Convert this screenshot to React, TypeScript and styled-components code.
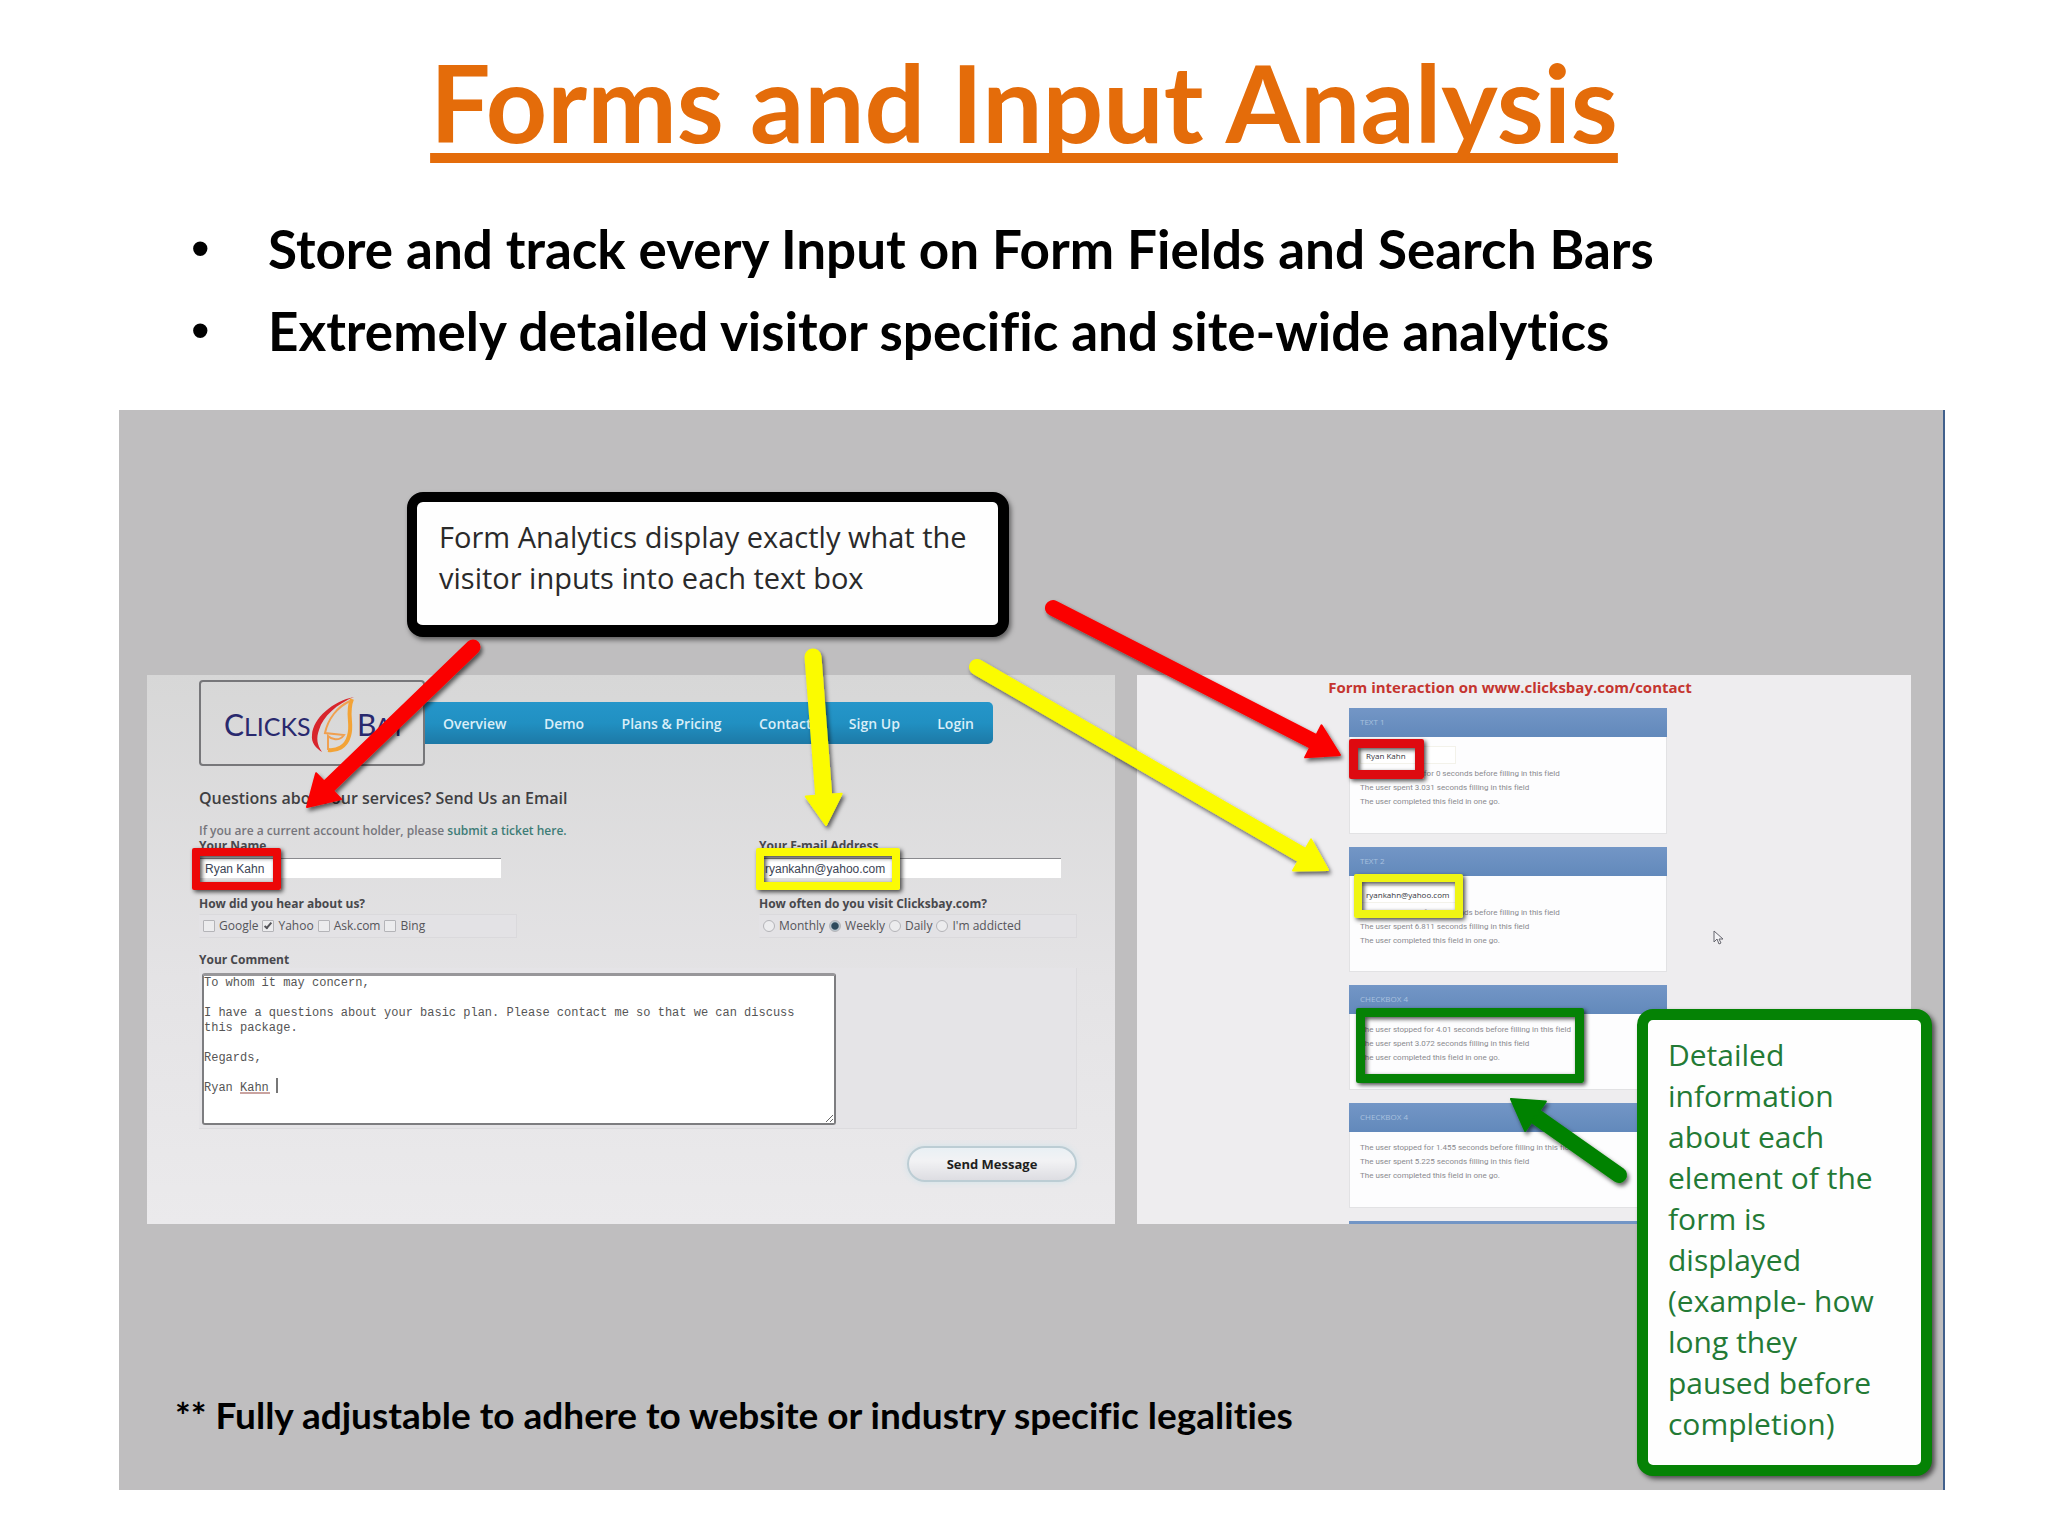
import React from "react";
import styled, { createGlobalStyle, css } from "styled-components";

const GlobalStyle = createGlobalStyle`
  *, *::before, *::after { box-sizing: border-box; }
  body {
    margin: 0;
    background: #fff;
    font-family: Lato, "Open Sans", sans-serif;
    font-variant-ligatures: no-common-ligatures;
  }
  h1, h2, h3, p, ul, fieldset { margin: 0; padding: 0; border: 0; }
`;

const humanist = `"Open Sans", "Noto Sans", sans-serif`;

/* ---------- slide ---------- */

const Slide = styled.main`
  display: flex;
  flex-direction: column;
  padding: 38px 103px 44px 119px;
`;

const Title = styled.h1`
  align-self: center;
  margin-right: 16px;
  font-size: 107px;
  line-height: 128px;
  font-weight: 700;
  color: #e46c0a;
  text-decoration: underline;
  text-decoration-thickness: 10px;
  text-underline-offset: 10px;
  text-decoration-skip-ink: none;
`;

const Bullets = styled.ul`
  list-style: none;
  margin: 42px 0 38px;
  padding-left: 72px;
`;

const Bullet = styled.li`
  display: flex;
  font-size: 53px;
  line-height: 82px;
  font-weight: 700;
  color: #000;

  &::before {
    content: "•";
    flex: none;
    width: 77px;
    font-family: "Liberation Sans", Arial, sans-serif;
    font-weight: 400;
  }
`;

const Stage = styled.section`
  position: relative;
  display: flex;
  flex-direction: column;
  padding: 82px 32px 52px 28px;
  background: #bfbebf;
  border-right: 2px solid #41608c;
`;

const calloutBase = css`
  border-style: solid;
  border-radius: 16px;
  background: #fefefe;
  font-family: ${humanist};
  line-height: 41px;
`;

const TopCallout = styled.p`
  ${calloutBase}
  width: 602px;
  min-height: 145px;
  margin-left: 260px;
  padding: 14px 22px;
  border-width: 10px 11px 12px 10px;
  border-color: #000;
  font-size: 29px;
  color: #2a2a2a;
  box-shadow: 2px 3px 5px rgba(0, 0, 0, 0.5);
`;

const SideCallout = styled.p`
  ${calloutBase}
  position: absolute;
  right: 11px;
  bottom: 14px;
  width: 295px;
  height: 467px;
  padding: 14px 20px;
  border-width: 11px;
  border-color: #058205;
  font-size: 30px;
  color: #237a35;
  box-shadow: 3px 3px 5px rgba(0, 0, 0, 0.6);
`;

const Panels = styled.div`
  display: grid;
  grid-template-columns: 968fr 774fr;
  gap: 22px;
  margin-top: 38px;
`;

const Note = styled.p`
  margin: 168px 0 0 28px;
  font-size: 37px;
  line-height: 46px;
  font-weight: 700;
  color: #000;
`;

/* ---------- contact page ---------- */

const ContactPanel = styled.div`
  padding: 5px 38px 36px 52px;
  background: linear-gradient(#d7d7d7, #e4e3e5 55%, #ebeaec);
  font-family: ${humanist};
  color: #4c4c50;
`;

const Header = styled.header`
  display: flex;
  align-items: center;
  padding-right: 84px;
`;

const LogoBox = styled.div`
  flex: none;
  width: 226px;
  height: 86px;
  border: 2px solid #77777a;
  border-radius: 4px;
`;

const Nav = styled.nav`
  flex: 1;
  display: flex;
  justify-content: space-between;
  align-items: center;
  height: 42px;
  padding: 0 19px 0 18px;
  border-radius: 0 5px 5px 0;
  background: linear-gradient(#2596ca, #2190c2 50%, #1d79a6);
`;

const NavLink = styled.a`
  font-size: 14px;
  font-weight: 600;
  color: #d9eef8;
  text-decoration: none;
`;

const PanelHeading = styled.h2`
  margin: 19px 0 12px;
  font-size: 16px;
  line-height: 26px;
  font-weight: 600;
  color: #3f3f42;
`;

const Intro = styled.p`
  font-size: 12px;
  line-height: 15px;
  font-weight: 600;
  color: #76767c;
`;

const TicketLink = styled.a`
  color: #3d7c76;
  text-decoration: none;
`;

const FieldGrid = styled.div`
  display: grid;
  grid-template-columns: 318px 318px;
  justify-content: space-between;
`;

const labelText = css`
  display: block;
  font-size: 12px;
  line-height: 16px;
  font-weight: 700;
  color: #48484c;
`;

const Label = styled.label`
  ${labelText}
`;

const Legend = styled.legend`
  ${labelText}
  padding: 0 0 2px;
`;

const TextWrap = styled.div`
  position: relative;
  height: 28px;
  padding-top: 4px;
`;

const TextInput = styled.input`
  display: block;
  width: 302px;
  height: 20px;
  padding: 0 6px;
  border: 0;
  border-top: 1px solid #8a8a8e;
  background: #fff;
  font-family: "Liberation Sans", Arial, sans-serif;
  font-size: 12px;
  color: #3c4454;
`;

const Highlight = styled.span<{ $color: string; $x: number; $y: number; $w: number; $h: number; $b?: number }>`
  position: absolute;
  left: ${(p) => p.$x}px;
  top: ${(p) => p.$y}px;
  width: ${(p) => p.$w}px;
  height: ${(p) => p.$h}px;
  border: ${(p) => p.$b ?? 8}px solid ${(p) => p.$color};
  border-radius: 2px;
  box-shadow: 2px 2px 4px rgba(0, 0, 0, 0.7), inset 2px 2px 4px rgba(0, 0, 0, 0.7);
  pointer-events: none;
`;

const Choices = styled.fieldset`
  min-width: 0;
  margin-top: 14px;
`;

const ChoiceRow = styled.div`
  display: flex;
  align-items: center;
  gap: 4px;
  height: 24px;
  padding: 0 3px;
  border: 1px solid #dad9dc;
  border-left-color: transparent;
  background: #e3e2e5;
`;

const Choice = styled.label`
  display: flex;
  align-items: center;
  gap: 4px;
  font-size: 12px;
  line-height: 16px;
  color: #55555a;
  white-space: nowrap;
`;

const Tick = styled.input`
  appearance: none;
  flex: none;
  width: 12px;
  height: 12px;
  margin: 0;
  border: 1px solid #b4b4b8;
  border-radius: ${(p) => (p.type === "radio" ? "50%" : "1px")};
  background: #ececee;

  &[type="checkbox"]:checked::after {
    content: "";
    display: block;
    width: 4px;
    height: 8px;
    margin: 0 0 0 3px;
    border: solid #55555a;
    border-width: 0 2px 2px 0;
    transform: rotate(40deg);
  }

  &[type="radio"]:checked {
    background: radial-gradient(circle, #2d4a5c 45%, #b9c6ce 60%);
  }
`;

const CommentLabel = styled(Label)`
  margin-top: 14px;
`;

const CommentWrap = styled.div`
  position: relative;
  padding: 5px 3px 3px;
  border: solid #dcdbde;
  border-width: 0 1px 1px 0;
  background: #e5e4e7;
`;

const Comment = styled.textarea`
  display: block;
  width: 634px;
  height: 152px;
  padding: 0;
  border: 2px solid #7d7d80;
  border-top: 3px solid #98979a;
  border-radius: 3px;
  background: #fff;
  font-family: "Liberation Mono", "Courier New", monospace;
  font-size: 12px;
  line-height: 15px;
  color: #555;
`;

const SpellingMark = styled.span`
  position: absolute;
  left: 41px;
  top: 124px;
  width: 30px;
  height: 2px;
  background: #c9a3a0;
`;

const Caret = styled.span`
  position: absolute;
  left: 77px;
  top: 110px;
  width: 2px;
  height: 15px;
  background: #777;
`;

const SendButton = styled.button`
  display: block;
  width: 170px;
  height: 36px;
  margin: 17px 0 0 auto;
  padding: 0;
  border: 2px solid #bccdd4;
  border-radius: 18px;
  background: linear-gradient(#e9f0f4, #f2f2f4 40%, #dddde2);
  box-shadow: 0 0 6px #cfe3ea;
  font-family: ${humanist};
  font-size: 13px;
  font-weight: 700;
  color: #1e1e20;
`;

/* ---------- analytics page ---------- */

const ReportPanel = styled.div`
  position: relative;
  display: flex;
  flex-direction: column;
  align-items: flex-start;
  gap: 13px;
  max-height: 549px;
  overflow: hidden;
  padding-left: 212px;
  background: #eeedef;
  font-family: ${humanist};
`;

const ReportTitle = styled.h2`
  align-self: center;
  margin: 5px 0 0 -240px;
  font-size: 15px;
  line-height: 15px;
  font-weight: 700;
  color: #c5352f;
`;

const Card = styled.article<{ $h: number }>`
  position: relative;
  flex: none;
  width: 318px;
  height: ${(p) => p.$h}px;
  border: 1px solid #e2e2e4;
  border-top: 0;
  background: #fdfdfe;
`;

const CardTitle = styled.h3`
  height: 29px;
  margin: 0 -1px;
  padding-left: 11px;
  background: linear-gradient(#7396c6, #6289bb);
  font-size: 8px;
  line-height: 27px;
  font-weight: 400;
  color: #a9c1df;
`;

const CardBody = styled.div`
  padding: 9px 10px;
  font-family: Roboto, ${humanist};
  font-size: 8px;
  line-height: 14px;
  color: #8a8a8e;
`;

const CardInput = styled.input`
  display: block;
  width: 96px;
  height: 18px;
  margin-bottom: 3px;
  padding: 0 5px;
  border: 1px solid #f3f2ea;
  background: #fff;
  font-family: ${humanist};
  font-size: 8px;
  color: #34343c;
`;

const Cursor = styled.svg`
  position: absolute;
  left: 576px;
  top: 255px;
`;

const Arrows = styled.svg`
  position: absolute;
  left: 0;
  top: 0;
  pointer-events: none;
`;

/* ---------- data ---------- */

const navItems = ["Overview", "Demo", "Plans & Pricing", "Contact", "Sign Up", "Login"];

const sources = [
  { name: "Google", on: false },
  { name: "Yahoo", on: true },
  { name: "Ask.com", on: false },
  { name: "Bing", on: false },
];

const visits = ["Monthly", "Weekly", "Daily", "I'm addicted"];

const comment = `To whom it may concern,

I have a questions about your basic plan. Please contact me so that we can discuss
this package.

Regards,

Ryan Kahn `;

const RED = "#fb0505";
const DARK_RED = "#de0a10";
const YELLOW = "#fbfb05";
const GREEN = "#058205";

const cards = [
  { title: "TEXT 1", value: "Ryan Kahn", pause: "0", spent: "3.031", height: 126, mark: { $color: DARK_RED, $x: -1, $y: 31, $w: 75, $h: 40, $b: 9 } },
  { title: "TEXT 2", value: "ryankahn@yahoo.com", pause: "0", spent: "6.811", height: 125, mark: { $color: "#eff514", $x: 4, $y: 27, $w: 109, $h: 44 } },
  { title: "CHECKBOX 4", pause: "4.01", spent: "3.072", height: 105, mark: { $color: GREEN, $x: 6, $y: 23, $w: 228, $h: 75, $b: 9 } },
  { title: "CHECKBOX 4", pause: "1.455", spent: "5.225", height: 105 },
  { title: "", pause: "", spent: "", height: 105 },
];

/* Each arrow runs from its round end (x1,y1) to its tip (x2,y2). */
const arrows = [
  { color: RED, x1: 473, y1: 647, x2: 307, y2: 807, w: 15 },
  { color: YELLOW, x1: 813, y1: 657, x2: 826, y2: 825, w: 17 },
  { color: YELLOW, x1: 977, y1: 667, x2: 1328, y2: 870, w: 16 },
  { color: RED, x1: 1053, y1: 608, x2: 1340, y2: 755, w: 16 },
  { color: GREEN, x1: 1619, y1: 1175, x2: 1511, y2: 1099, w: 16 },
];

function Arrow({ color, x1, y1, x2, y2, w }: (typeof arrows)[number]) {
  const len = Math.hypot(x2 - x1, y2 - y1);
  const ux = (x2 - x1) / len;
  const uy = (y2 - y1) / len;
  const bx = x2 - ux * 30;
  const by = y2 - uy * 30;
  const half = 18;
  return (
    <g>
      <line x1={x1} y1={y1} x2={bx + ux * 4} y2={by + uy * 4} stroke={color} strokeWidth={w} strokeLinecap="round" />
      <polygon
        points={`${x2},${y2} ${bx - uy * half},${by + ux * half} ${bx + uy * half},${by - ux * half}`}
        fill={color}
        stroke={color}
        strokeWidth="2"
        strokeLinejoin="round"
      />
    </g>
  );
}

function Logo() {
  return (
    <LogoBox>
      <svg width="222" height="82" viewBox="0 0 222 82" role="img" aria-label="Clicks Bay">
        <g fill="#29296e" fontFamily="Lato, sans-serif">
          <text x="23" y="54" fontSize="30">C</text>
          <text x="43" y="54" fontSize="25">LICKS</text>
          <text x="156" y="54" fontSize="30">B</text>
          <text x="174" y="54" fontSize="25">AY</text>
        </g>
        <path d="M153 15 C132 19 112 36 111 53 C110 61 115 66 121 70 C116 63 115 56 118 48 C122 34 136 22 153 15Z" fill="#d8252c" />
        <path d="M151 17 C145 31 152 42 148 54 C145 65 136 69 127 68" fill="none" stroke="#f3a336" strokeWidth="4" />
        <path d="M149 19 C136 25 127 37 124 51 L143 53 C138 60 130 57 127 54 V68" fill="none" stroke="#f0a050" strokeWidth="2" />
      </svg>
    </LogoBox>
  );
}

export default function App() {
  return (
    <>
      <GlobalStyle />
      <Slide>
        <Title>Forms and Input Analysis</Title>
        <Bullets>
          <Bullet>Store and track every Input on Form Fields and Search Bars</Bullet>
          <Bullet>Extremely detailed visitor specific and site-wide analytics</Bullet>
        </Bullets>

        <Stage>
          <TopCallout>Form Analytics display exactly what the visitor inputs into each text box</TopCallout>

          <Panels>
            <ContactPanel>
              <Header>
                <Logo />
                <Nav>
                  {navItems.map((item) => (
                    <NavLink href="#" key={item}>{item}</NavLink>
                  ))}
                </Nav>
              </Header>
              <PanelHeading>Questions about our services? Send Us an Email</PanelHeading>
              <Intro>
                If you are a current account holder, please <TicketLink href="#">submit a ticket here.</TicketLink>
              </Intro>

              <FieldGrid>
                <div>
                  <Label htmlFor="name">Your Name</Label>
                  <TextWrap>
                    <TextInput id="name" defaultValue="Ryan Kahn" />
                    <Highlight $color="#ec0707" $x={-7} $y={-6} $w={89} $h={42} />
                  </TextWrap>
                </div>
                <div>
                  <Label htmlFor="email">Your E-mail Address</Label>
                  <TextWrap>
                    <TextInput id="email" defaultValue="ryankahn@yahoo.com" />
                    <Highlight $color={YELLOW} $x={-3} $y={-6} $w={144} $h={42} />
                  </TextWrap>
                </div>
                <Choices>
                  <Legend>How did you hear about us?</Legend>
                  <ChoiceRow>
                    {sources.map((s) => (
                      <Choice key={s.name}>
                        <Tick type="checkbox" defaultChecked={s.on} />
                        {s.name}
                      </Choice>
                    ))}
                  </ChoiceRow>
                </Choices>
                <Choices>
                  <Legend>How often do you visit Clicksbay.com?</Legend>
                  <ChoiceRow>
                    {visits.map((v) => (
                      <Choice key={v}>
                        <Tick type="radio" name="visits" defaultChecked={v === "Weekly"} />
                        {v}
                      </Choice>
                    ))}
                  </ChoiceRow>
                </Choices>
              </FieldGrid>

              <CommentLabel htmlFor="comment">Your Comment</CommentLabel>
              <CommentWrap>
                <Comment id="comment" spellCheck={false} defaultValue={comment} />
                <SpellingMark />
                <Caret />
              </CommentWrap>
              <SendButton type="button">Send Message</SendButton>
            </ContactPanel>

            <ReportPanel>
              <ReportTitle>Form interaction on www.clicksbay.com/contact</ReportTitle>
              {cards.map((c, i) => (
                <Card key={i} $h={c.height}>
                  <CardTitle>{c.title}</CardTitle>
                  {c.spent && (
                    <CardBody>
                      {c.value && <CardInput aria-label={c.title} defaultValue={c.value} />}
                      <p>The user stopped for {c.pause} seconds before filling in this field</p>
                      <p>The user spent {c.spent} seconds filling in this field</p>
                      <p>The user completed this field in one go.</p>
                    </CardBody>
                  )}
                  {c.mark && <Highlight {...c.mark} />}
                </Card>
              ))}
              <Cursor width="12" height="16" viewBox="0 0 12 16">
                <path d="M1 1 V12 L4 9 L6 14 L8 13 L6 9 H10Z" fill="#f4f4f6" stroke="#66666e" />
              </Cursor>
            </ReportPanel>
          </Panels>

          <Note>** Fully adjustable to adhere to website or industry specific legalities</Note>

          <Arrows width="1826" height="1082" viewBox="119 410 1826 1082">
            <defs>
              <filter id="drop" x="-10%" y="-10%" width="120%" height="120%">
                <feDropShadow dx="2" dy="3" stdDeviation="2" floodOpacity="0.6" />
              </filter>
            </defs>
            <g filter="url(#drop)">
              {arrows.map((a, i) => (
                <Arrow key={i} {...a} />
              ))}
            </g>
          </Arrows>
          <SideCallout>
            Detailed information about each element of the form is displayed (example- how long they paused before completion)
          </SideCallout>
        </Stage>
      </Slide>
    </>
  );
}
